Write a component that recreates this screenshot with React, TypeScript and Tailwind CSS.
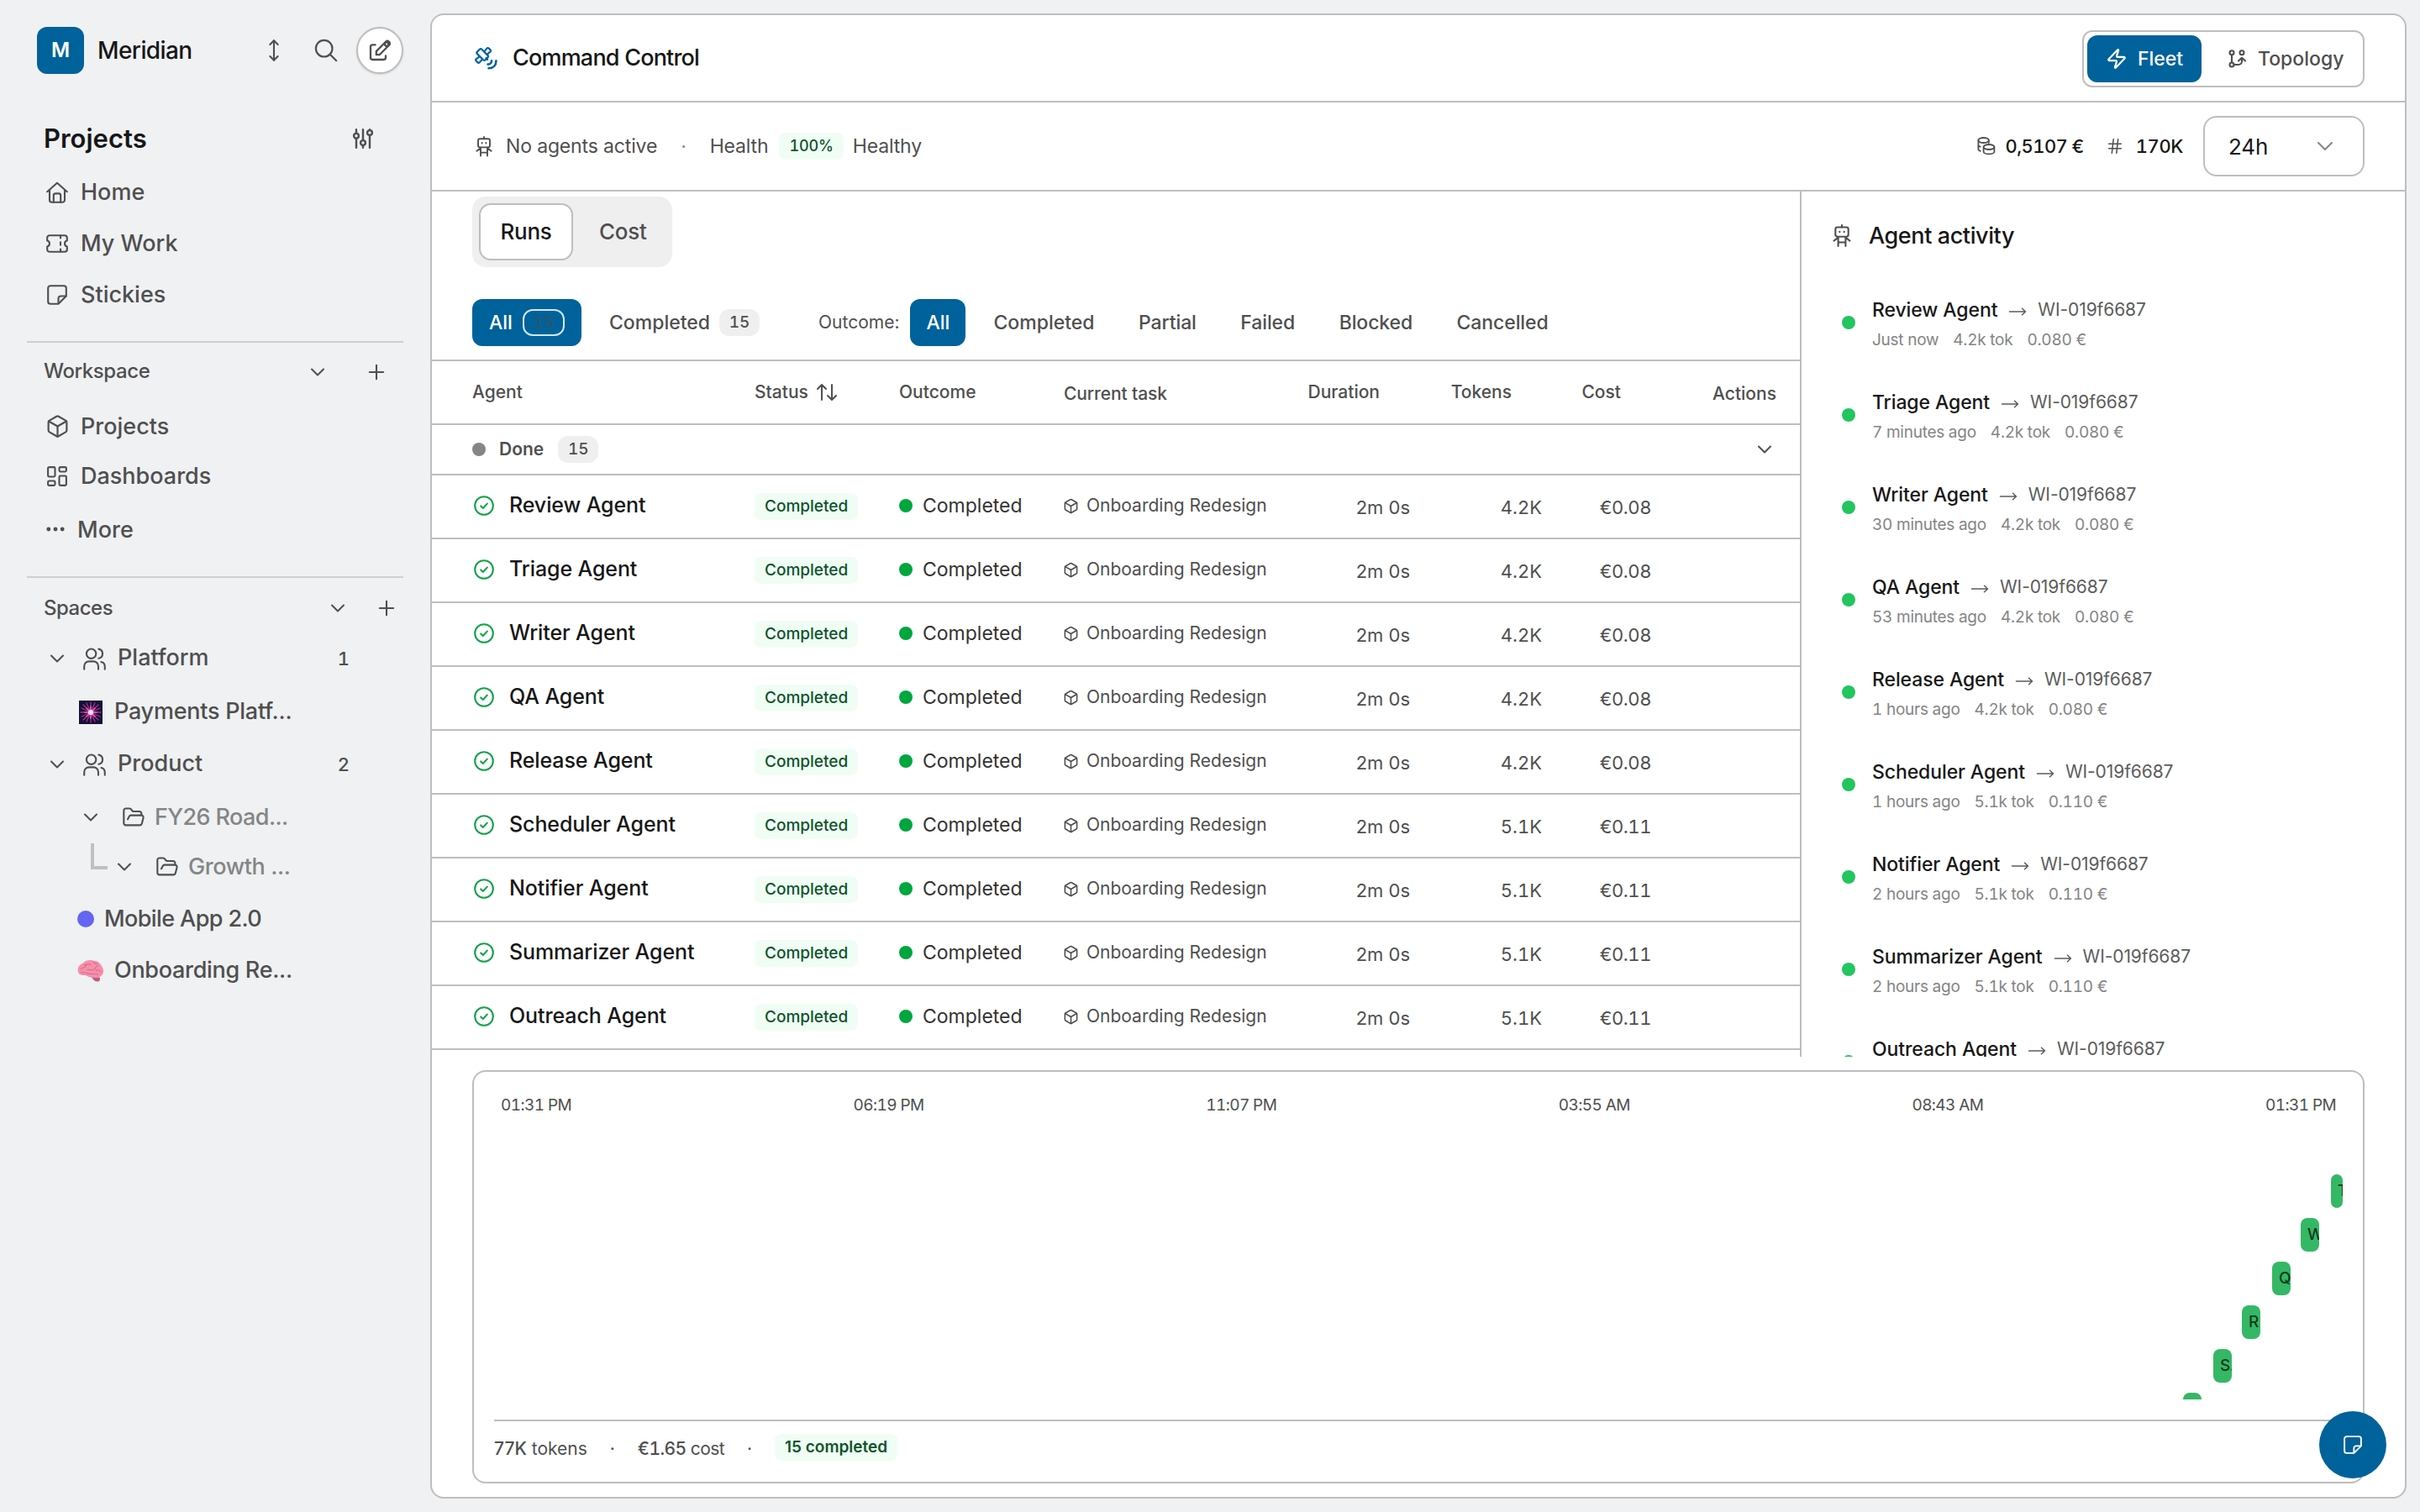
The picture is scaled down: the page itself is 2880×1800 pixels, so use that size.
import type { ReactNode } from "react";
import { Box, ChevronDown, Ellipsis, FolderOpen, Hash, MoveVertical, Plus, Zap } from "lucide-react";

type SvgProps = {
  w: number;
  h: number;
  stroke?: number;
  className?: string;
  children: ReactNode;
};

const Svg = ({ w, h, stroke = 2.1, className, children }: SvgProps) => (
  <svg
    width={w}
    height={h}
    viewBox={`0 0 ${w} ${h}`}
    fill="none"
    stroke="currentColor"
    strokeWidth={stroke}
    strokeLinecap="round"
    strokeLinejoin="round"
    className={className ?? "shrink-0"}
  >
    {children}
  </svg>
);

const HomeIcon = () => (
  <Svg w={26} h={26}>
    <path d="M1.2 12.2 13 1.8l11.8 10.4" />
    <path d="M4 10v12a2.8 2.8 0 0 0 2.8 2.8h12.4A2.8 2.8 0 0 0 22 22V10" />
    <path d="M8.8 24.8v-8a2.4 2.4 0 0 1 2.4-2.4h3.6a2.4 2.4 0 0 1 2.4 2.4v8" />
  </Svg>
);

const TicketIcon = () => (
  <Svg w={26} h={22}>
    <path d="M1.2 7.5a3.6 3.6 0 0 1 0 7V18a2.8 2.8 0 0 0 2.8 2.8h18a2.8 2.8 0 0 0 2.8-2.8v-3.5a3.6 3.6 0 0 1 0-7V4A2.8 2.8 0 0 0 22 1.2H4A2.8 2.8 0 0 0 1.2 4z" />
    <path d="M17 1.5v3M17 9.3v3.4M17 17.5v3" />
  </Svg>
);

const StickyIcon = ({ size = 24 }: { size?: number }) => (
  <svg
    width={size}
    height={size}
    viewBox="0 0 24 24"
    fill="none"
    stroke="currentColor"
    strokeWidth={2.1}
    strokeLinejoin="round"
    className="shrink-0"
  >
    <path d="M13.5 22.8H4a2.8 2.8 0 0 1-2.8-2.8V4A2.8 2.8 0 0 1 4 1.2h16A2.8 2.8 0 0 1 22.8 4v9.5z" />
    <path d="M13.5 22.8v-6.5a2.8 2.8 0 0 1 2.8-2.8h6.5" />
  </svg>
);

const DashboardIcon = () => (
  <Svg w={24} h={24}>
    <rect x="1.1" y="1.1" width="8.4" height="11.4" rx="1.4" />
    <rect x="14.5" y="1.1" width="8.4" height="5.4" rx="1.4" />
    <rect x="1.1" y="17.5" width="8.4" height="5.4" rx="1.4" />
    <rect x="14.5" y="11.5" width="8.4" height="11.4" rx="1.4" />
  </Svg>
);

const SlidersIcon = () => (
  <Svg w={26} h={24} stroke={2.4}>
    <path d="M5 1.2v4.6M5 12v10.8M13 1.2v12.6M13 20v2.8M21 1.2v.8M21 8v14.8" />
    <circle cx="5" cy="8.8" r="2.9" />
    <circle cx="13" cy="17" r="2.9" />
    <circle cx="21" cy="5" r="2.9" />
  </Svg>
);

const SearchIcon = () => (
  <Svg w={28} h={28} stroke={2.2}>
    <circle cx="11.7" cy="11.7" r="9.8" />
    <path d="m18.8 18.8 7.4 7.4" />
  </Svg>
);

const EditIcon = () => (
  <Svg w={26} h={26} stroke={2.3}>
    <path d="M7.6 6.4H4.4A2.4 2.4 0 0 0 2 8.8v12.8A2.4 2.4 0 0 0 4.4 24h13.2a2.4 2.4 0 0 0 2.4-2.4v-2.2" />
    <path d="M8.8 18.2v-4.1L20 2.8a2.8 2.8 0 0 1 4 4L12.6 18.2z" />
    <circle cx="21.2" cy="5.6" r="2.2" />
  </Svg>
);

const UsersIcon = () => (
  <Svg w={27} h={27}>
    <circle cx="9.6" cy="7.2" r="5.7" />
    <path d="M1.2 25.8v-3.6a5.8 5.8 0 0 1 5.8-5.8h5.2a5.8 5.8 0 0 1 5.8 5.8v3.6" />
    <path d="M18.4 1.6a5.7 5.7 0 0 1 0 11.2M21.4 17c2.6.6 4.4 2.8 4.4 5.6v3.2" />
  </Svg>
);

const SatelliteIcon = () => (
  <Svg w={28} h={28} stroke={2.2}>
    <rect x="3.4" y="6.2" width="13.6" height="7.6" rx="1.8" transform="rotate(45 10.2 10)" />
    <path d="m13 5.6 2.6-3.2a1.4 1.4 0 0 1 2 0l2 2a1.4 1.4 0 0 1 0 2l-3.2 2.8M6 12.8l-3.4 2.6a1.4 1.4 0 0 0 0 2l2 2a1.4 1.4 0 0 0 2 0l2.8-3.2M14.4 14.2l1.8 1.8" />
    <path d="M21 17.2c0 2.6-1.8 4.4-4.4 4.4M26.4 17.4c0 5.2-3.4 8.8-8.8 8.8" strokeWidth={2.6} />
  </Svg>
);

const RobotIcon = ({ scale = 1 }: { scale?: number }) => (
  <svg
    width={20 * scale}
    height={25 * scale}
    viewBox="0 0 20 25"
    fill="none"
    stroke="currentColor"
    strokeWidth={1.9}
    strokeLinecap="round"
    strokeLinejoin="round"
    className="shrink-0"
  >
    <path d="M10 1v2.2" />
    <rect x="3" y="3.2" width="14" height="10.2" rx="2.2" />
    <path d="M7.6 8v.4M12.4 8v.4" strokeWidth={2} />
    <path d="M6 13.6v10M14 13.6v10M6.2 19.6h7.6M5.6 14.6l-4.2 3.2M14.4 14.6l4.2 3.2" />
  </svg>
);

const CoinsIcon = () => (
  <Svg w={22} h={22} stroke={1.8}>
    <ellipse cx="7.6" cy="4" rx="6.2" ry="3" />
    <path d="M1.4 4v10.6c0 1 .9 1.8 2.4 2.2M1.4 9.4c0 1 .9 1.8 2.4 2.2M13.8 4v3" />
    <ellipse cx="14" cy="12" rx="6.4" ry="3" />
    <path d="M7.6 12v5.4c0 1.7 2.9 3 6.4 3s6.4-1.3 6.4-3V12" />
  </Svg>
);

const TopologyIcon = () => (
  <Svg w={22} h={22}>
    <circle cx="4" cy="3.8" r="2.5" />
    <circle cx="16" cy="3.8" r="2.5" />
    <circle cx="4" cy="18" r="2.5" />
    <path d="M4 6.4v9M6.6 18H12a4 4 0 0 0 4-4v-4M12 13.6l4-3.8 4 3.8" />
  </Svg>
);

const SortIcon = () => (
  <Svg w={26} h={22} stroke={2} className="ml-[9px] shrink-0">
    <path d="M7 20V2M2 7l5-5 5 5M19 2v18M14 15l5 5 5-5" />
  </Svg>
);

const ArrowIcon = () => (
  <Svg w={22} h={12} stroke={1.5} className="mx-[13px] mt-1 shrink-0 text-[#5c5c5c]">
    <path d="M1.500 6h19M16.500 2.200 20.500 6l-4 3.800" />
  </Svg>
);

const CheckIcon = () => (
  <Svg w={24} h={24}>
    <circle cx="12" cy="12" r="10.8" />
    <path d="m8.2 12.4 2.6 2.6 5-5.4" />
  </Svg>
);

const FireworkIcon = () => (
  <Svg w={28} h={28} stroke={1}>
    <rect width="28" height="28" fill="#160f38" stroke="none" />
    <path
      d="M14 2v24M2 14h24M5 5l18 18M23 5 5 23M9 3l10 22M19 3 9 25M3 9l22 10M3 19 25 9"
      stroke="#a8328c"
      strokeWidth={1.3}
    />
    <path d="M14 7v14M7 14h14M9 9l10 10M19 9 9 19" stroke="#ee5cb4" strokeWidth={1.6} />
    <circle cx="14" cy="14" r="3" fill="#ffe3f4" stroke="none" />
  </Svg>
);

const BrainIcon = () => (
  <Svg w={32} h={28} stroke={1.1}>
    <path d="M17 21c2 4 5 6 8 5.500c2-.5 2.500-3 1.500-5z" fill="#c75b78" stroke="none" />
    <path
      d="M1 15C-.5 10 3 6 7 4.500C10 1 15 .5 18.500 1.500C24 1.500 28 5 29.500 9c2.500 4 2 9-1.500 11c-3 2.500-7 2-10 1.500c-4 .5-6-1.500-8.500-2.500C5 19.500 1.500 18 1 15z"
      fill="#f490ac"
      stroke="none"
    />
    <path
      d="M4 12c2-3 5-1 6-4s4-3 6-1M12 13c3-2 5 1 8-1s2-5 5-4M4 16c4-1 6 0 9 1s8 0 12 1M22 14c2-2 5-1 6 1M19 3c1 2 3 3 5 2M8 6c1 1 2 1 3 0"
      stroke="#dc6d8a"
    />
  </Svg>
);

const Chevron = ({ className = "" }: { className?: string }) => (
  <ChevronDown size={28} strokeWidth={1.8} className={`shrink-0 ${className}`} />
);

const NavItem = ({ icon, label, height }: { icon: ReactNode; label: string; height: string }) => (
  <div className={`flex items-center pl-[55px] ${height}`}>
    <span className="flex w-[26px] justify-center">{icon}</span>
    <span className="ml-[15px]">{label}</span>
  </div>
);

const Sidebar = () => (
  <aside className="flex w-[512px] shrink-0 flex-col pt-8 text-[27px] leading-8 font-medium text-[#4f4f4f]">
    <div className="flex h-14 items-center pr-8 pl-11">
      <div className="flex size-14 items-center justify-center rounded-xl bg-[#00629b] text-2xl font-semibold text-white">
        M
      </div>
      <span className="ml-4 text-[28px] tracking-[-0.6px] text-[#171717]">Meridian</span>
      <div className="ml-auto flex items-center">
        <MoveVertical size={28} strokeWidth={1.8} />
        <span className="mr-[22px] ml-[34px]">
          <SearchIcon />
        </span>
        <div className="flex size-14 items-center justify-center rounded-full border-2 border-[#bebebe] bg-white shadow-sm">
          <EditIcon />
        </div>
      </div>
    </div>

    <div className="mt-12 flex h-[58px] items-center justify-between pr-[67px] pl-[52px]">
      <h2 className="text-[31px] font-semibold text-[#171717]">Projects</h2>
      <SlidersIcon />
    </div>
    <nav className="mt-[5px] flex flex-col gap-px">
      <NavItem icon={<HomeIcon />} label="Home" height="h-15" />
      <NavItem icon={<TicketIcon />} label="My Work" height="h-15" />
      <NavItem icon={<StickyIcon />} label="Stickies" height="h-15" />
    </nav>

    <div className="mt-[25px] mr-8 ml-8 h-0.5 bg-[#cdcfd1]" />
    <div className="flex h-[70px] items-center pr-[50px] pl-[52px]">
      <span className="pb-0.5 text-2xl tracking-[-0.4px]">Workspace</span>
      <Chevron className="ml-auto" />
      <Plus size={28} strokeWidth={1.8} className="ml-[42px]" />
    </div>
    <nav>
      <NavItem icon={<Box size={29} strokeWidth={1.8} className="shrink-0" />} label="Projects" height="h-[59px]" />
      <NavItem icon={<DashboardIcon />} label="Dashboards" height="h-[59px]" />
      <div className="flex h-[67px] items-center pl-[52px]">
        <Ellipsis size={28} strokeWidth={2.2} />
        <span className="ml-3 pt-0.5">More</span>
      </div>
    </nav>

    <div className="mt-[23px] mr-8 ml-8 h-0.5 bg-[#cdcfd1]" />
    <div className="flex h-[72px] items-center pr-[38px] pl-[52px]">
      <span className="text-2xl tracking-[-0.5px]">Spaces</span>
      <Chevron className="ml-auto" />
      <Plus size={28} strokeWidth={1.8} className="ml-[30px]" />
    </div>
    <div className="flex h-12 items-center pr-[96px] pl-[54px]">
      <Chevron />
      <span className="mr-[14px] ml-[17px]">
        <UsersIcon />
      </span>
      <span className="pb-0.5">Platform</span>
      <span className="ml-auto text-[22px] tabular-nums">1</span>
    </div>
    <div className="flex h-20 items-center gap-[14px] pl-[94px]">
      <FireworkIcon />
      <span className="pb-0.5 tracking-[-0.25px]">Payments Platf...</span>
    </div>
    <div className="flex h-11 items-center pr-[96px] pl-[54px]">
      <Chevron />
      <span className="mr-[14px] ml-[17px]">
        <UsersIcon />
      </span>
      <span className="pb-0.5">Product</span>
      <span className="ml-auto text-[22px] tabular-nums">2</span>
    </div>
    <div className="flex h-[82px] items-center pl-[94px]">
      <Chevron />
      <FolderOpen size={28} strokeWidth={1.8} className="mr-[11px] ml-[23px]" />
      <span className="tracking-[-0.6px] text-[#858585]">FY26 Road...</span>
    </div>
    <div className="flex h-9 items-center pl-[108px]">
      <div className="mr-1.5 h-[31px] w-5 self-start border-b-4 border-l-4 border-[#bfc0c1] -mt-2.5" />
      <Chevron />
      <FolderOpen size={28} strokeWidth={1.8} className="mr-[11px] ml-[23px]" />
      <span className="tracking-[-0.4px] text-[#858585]">Growth ...</span>
    </div>
    <div className="flex h-[88px] items-center gap-3 pl-[92px]">
      <span className="size-5 rounded-full bg-[#6466f1]" />
      <span className="tracking-[-0.6px]">Mobile App 2.0</span>
    </div>
    <div className="flex h-9 items-center gap-3 pl-[92px]">
      <BrainIcon />
      <span className="pb-0.5 tracking-[-0.3px]">Onboarding Re...</span>
    </div>
  </aside>
);

const Header = () => (
  <>
    <div className="flex h-[104px] items-center justify-between border-b-2 border-[#bebebe] px-12 pt-0.5">
      <div className="flex items-center pb-0.5">
        <span className="ml-0.5 text-[#00629b]">
          <SatelliteIcon />
        </span>
        <h1 className="ml-[18px] text-[27px] font-medium tracking-[-0.8px] text-[#171717]">Command Control</h1>
      </div>
      <div className="flex h-[68px] w-[336px] items-center rounded-xl border-2 border-[#bebebe] px-1 text-[23px] font-medium">
        <button className="flex h-14 w-[136px] items-center justify-center gap-3 rounded-xl bg-[#00629b] text-white">
          <Zap size={26} strokeWidth={2} />
          Fleet
        </button>
        <button className="ml-8 flex items-center gap-[13px] text-[#4f4f4f]">
          <TopologyIcon />
          Topology
        </button>
      </div>
    </div>
    <div className="flex h-[106px] items-center border-b-2 border-[#bebebe] px-12 text-[23px] tracking-[-0.15px] text-[#4f4f4f]">
      <span className="ml-1">
        <RobotIcon />
      </span>
      <span className="ml-4">No agents active</span>
      <span className="mx-[28px] text-[#8a8a8a]">·</span>
      <span>Health</span>
      <span className="mr-[11px] ml-[13px] flex h-8 items-center rounded-lg bg-[#f0fdf4] px-3 text-lg font-medium text-[#0d542b] tabular-nums">
        100%
      </span>
      <span>Healthy</span>
      <div className="ml-auto flex items-center text-[22px] font-medium text-[#171717]">
        <span className="text-[#4f4f4f]">
          <CoinsIcon />
        </span>
        <span className="ml-3 tracking-[-0.6px] tabular-nums">0,5107 €</span>
        <Hash size={22} strokeWidth={1.7} className="mr-3.5 ml-[26px] text-[#4f4f4f]" />
        <span className="tracking-[-0.4px] tabular-nums">170K</span>
        <div className="ml-6 flex h-18 w-48 items-center justify-between rounded-2xl border-2 border-[#bebebe] pr-[29px] pl-7 text-[26px] font-normal">
          24h
          <ChevronDown size={32} strokeWidth={1.5} className="text-[#858585]" />
        </div>
      </div>
    </div>
  </>
);

const outcomes = ["Completed", "Partial", "Failed", "Blocked", "Cancelled"];

const Filters = () => (
  <div className="flex h-[202px] flex-col border-b-2 border-[#bebebe] pt-1.5 pl-12 font-medium text-[#4f4f4f]">
    <div className="flex h-[84px] w-[238px] items-center rounded-2xl bg-[#efefef] pl-2 text-[26px] tracking-[-0.3px]">
      <div className="flex h-[68px] w-28 items-center justify-center rounded-[14px] border-2 border-[#bebebe] bg-white pb-0.5 text-[#171717]">
        Runs
      </div>
      <span className="ml-[31px] pb-0.5">Cost</span>
    </div>
    <div className="mt-[38px] flex h-14 items-center text-[23px]">
      <button className="flex h-14 w-[130px] items-center rounded-xl bg-[#00629b] pl-5 text-white">
        All
        <span className="ml-3 flex h-8 w-[50px] items-center justify-center rounded-[12px] border-2 border-[#d3e6f1] text-[19px] text-[#2e5468] tabular-nums">
          15
        </span>
      </button>
      <span className="ml-[33px]">Completed</span>
      <span className="ml-[11px] flex h-8 w-12 items-center justify-center rounded-[12px] bg-[#efefef] text-[19px] tabular-nums">
        15
      </span>
      <span className="ml-[70px] text-[21px] font-normal">Outcome:</span>
      <button className="ml-[13px] h-14 w-[66px] rounded-xl bg-[#00629b] text-white">All</button>
      {outcomes.map((o, i) => (
        <span key={o} className={i === 0 ? "ml-[33px]" : "ml-[52.5px] tracking-[-0.1px]"}>
          {o}
        </span>
      ))}
    </div>
  </div>
);

type Run = { name: string; tokens: string; cost: string };

const runs: Run[] = [
  { name: "Review Agent", tokens: "4.2K", cost: "€0.08" },
  { name: "Triage Agent", tokens: "4.2K", cost: "€0.08" },
  { name: "Writer Agent", tokens: "4.2K", cost: "€0.08" },
  { name: "QA Agent", tokens: "4.2K", cost: "€0.08" },
  { name: "Release Agent", tokens: "4.2K", cost: "€0.08" },
  { name: "Scheduler Agent", tokens: "5.1K", cost: "€0.11" },
  { name: "Notifier Agent", tokens: "5.1K", cost: "€0.11" },
  { name: "Summarizer Agent", tokens: "5.1K", cost: "€0.11" },
  { name: "Outreach Agent", tokens: "5.1K", cost: "€0.11" },
];

const RunsTable = () => (
  <div>
    <div className="grid h-[76px] grid-cols-[336px_172px_196px_283px_129px_157px_130px_149px] items-center border-b-2 border-[#bebebe] pl-12 text-[21px] font-medium text-[#4f4f4f]">
      <span>Agent</span>
      <span className="flex items-center">
        Status
        <SortIcon />
      </span>
      <span>Outcome</span>
      <span className="pt-1 tracking-[-0.1px]">Current task</span>
      <span className="pr-9 text-right">Duration</span>
      <span className="pr-9 text-right">Tokens</span>
      <span className="pr-9 text-right">Cost</span>
      <span className="pt-1 text-right">Actions</span>
    </div>
    <div className="flex h-15 items-center border-b-2 border-[#bebebe] pr-[28px] pl-12 text-[#4f4f4f]">
      <span className="size-4 rounded-full bg-[#858585]" />
      <span className="ml-4 text-[21px] font-semibold">Done</span>
      <span className="ml-[17px] flex h-8 w-12 items-center justify-center rounded-[12px] bg-[#efefef] text-[19px] font-medium tabular-nums">
        15
      </span>
      <Chevron className="ml-auto" />
    </div>
    {runs.map((run) => (
      <div
        key={run.name}
        className="grid h-[76px] grid-cols-[336px_172px_196px_283px_129px_157px_130px_149px] items-center border-b-2 border-[#bebebe] pl-12 text-[23px] text-[#4f4f4f]"
      >
        <span className="flex items-center gap-[18px] pb-0.5 pl-0.5 text-[25px] font-medium tracking-[-0.1px] text-[#171717]">
          <span className="text-[#16a34a]">
            <CheckIcon />
          </span>
          {run.name}
        </span>
        <span className="flex">
          <span className="flex h-8 items-center rounded-lg bg-[#f0fdf4] px-3 text-[19px] font-medium text-[#0d542b]">
            Completed
          </span>
        </span>
        <span className="flex items-center gap-3 pb-0.5 text-[#333]">
          <span className="size-4 rounded-full bg-[#00a63e]" />
          Completed
        </span>
        <span className="flex items-center gap-[9px] pb-0.5 text-[21px]">
          <Box size={19} strokeWidth={2} className="-ml-px" />
          Onboarding Redesign
        </span>
        <span className="pt-0.5 text-right text-[22px]">2m 0s</span>
        <span className="pt-0.5 text-right text-[22px] tabular-nums">{run.tokens}</span>
        <span className="pt-0.5 text-right text-[22px] tracking-[-0.4px] tabular-nums">{run.cost}</span>
      </div>
    ))}
  </div>
);

type Activity = { name: string; when: string; tok: string; cost: string };

const activity: Activity[] = [
  { name: "Review Agent", when: "Just now", tok: "4.2k tok", cost: "0.080 €" },
  { name: "Triage Agent", when: "7 minutes ago", tok: "4.2k tok", cost: "0.080 €" },
  { name: "Writer Agent", when: "30 minutes ago", tok: "4.2k tok", cost: "0.080 €" },
  { name: "QA Agent", when: "53 minutes ago", tok: "4.2k tok", cost: "0.080 €" },
  { name: "Release Agent", when: "1 hours ago", tok: "4.2k tok", cost: "0.080 €" },
  { name: "Scheduler Agent", when: "1 hours ago", tok: "5.1k tok", cost: "0.110 €" },
  { name: "Notifier Agent", when: "2 hours ago", tok: "5.1k tok", cost: "0.110 €" },
  { name: "Summarizer Agent", when: "2 hours ago", tok: "5.1k tok", cost: "0.110 €" },
  { name: "Outreach Agent", when: "2 hours ago", tok: "5.1k tok", cost: "0.110 €" },
];

const ActivityPanel = () => (
  <section className="flex-1 border-l-2 border-[#bebebe] pl-[37px]">
    <div className="mt-[25px] flex h-14 items-center text-[#4f4f4f]">
      <RobotIcon scale={1.1} />
      <h2 className="ml-[21px] text-[27px] font-medium tracking-[-0.4px] text-[#171717]">Agent activity</h2>
    </div>
    <div className="mt-5">
      {activity.map((a) => (
        <div key={a.name} className="flex h-[110px] items-center pl-[11px]">
          <span className="size-4 rounded-full bg-[#22c55e]" />
          <div className="ml-5 pt-[7px]">
            <div className="flex h-9 items-center text-[23px] font-medium tracking-[-0.1px] text-[#171717]">
              {a.name}
              <ArrowIcon />
              <span className="text-[21px] font-normal text-[#5c5c5c]">WI-019f6687</span>
            </div>
            <div className="flex h-[37px] items-center gap-[17px] text-[19px] tracking-[-0.25px] text-[#858585] tabular-nums">
              <span>{a.when}</span>
              <span>{a.tok}</span>
              <span>{a.cost}</span>
            </div>
          </div>
        </div>
      ))}
    </div>
  </section>
);

const ticks = ["01:31 PM", "06:19 PM", "11:07 PM", "03:55 AM", "08:43 AM", "01:31 PM"];

// left / top are offsets inside the 2200px wide lane area
const bars = [
  { label: "T", left: 2186, top: 52, width: 14 },
  { label: "W", left: 2150, top: 104, width: 22 },
  { label: "Q", left: 2116, top: 156, width: 22 },
  { label: "R", left: 2080, top: 208, width: 22 },
  { label: "S.", left: 2046, top: 260, width: 22 },
  { label: "N", left: 2010, top: 312, width: 22 },
];

const Timeline = () => (
  <section className="mx-12 mt-4 flex h-[492px] flex-col rounded-2xl border-2 border-[#bebebe] px-6">
    <div className="mt-6 flex h-8 items-center justify-between px-2 text-[19px] tracking-[-0.6px] text-[#4f4f4f] tabular-nums">
      {ticks.map((t, i) => (
        <span key={i}>{t}</span>
      ))}
    </div>
    <div className="relative mt-[14px] h-[320px] overflow-hidden">
      {bars.map((b) => (
        <div
          key={b.label}
          className="absolute h-10 overflow-hidden rounded-lg bg-[#34b865] pl-2 text-[19px] leading-10 font-medium tracking-[-0.5px] whitespace-nowrap text-[#0c3a1d]"
          style={{ left: b.left, top: b.top, width: b.width }}
        >
          {b.label}
        </div>
      ))}
    </div>
    <div className="mt-6 flex h-[70px] items-center border-t-2 border-[#bebebe] pb-0.5 text-[21px] text-[#4f4f4f]">
      <span>
        <span className="font-medium">77K</span> tokens
      </span>
      <span className="mx-[27px]">·</span>
      <span className="tracking-[-0.6px]">
        <span className="font-medium tabular-nums">€1.65</span> cost
      </span>
      <span className="mx-[27px]">·</span>
      <span className="mb-1 flex h-8 items-center rounded-lg bg-[#f0fdf4] px-3 text-[19px] font-semibold text-[#0d542b]">
        15 completed
      </span>
    </div>
  </section>
);

const App = () => (
  <div className="relative flex h-[1800px] w-[2880px] overflow-hidden bg-[#eff1f3] font-['Inter',sans-serif]">
    <Sidebar />
    <main className="mt-4 h-[1768px] w-[2352px] overflow-hidden rounded-2xl border-2 border-[#bebebe] bg-white">
      <Header />
      <div className="flex h-[1030px] overflow-hidden">
        <div className="w-[1628px]">
          <Filters />
          <RunsTable />
        </div>
        <ActivityPanel />
      </div>
      <Timeline />
    </main>
    <button className="absolute right-10 bottom-10 flex size-20 items-center justify-center rounded-full bg-[#00629b] text-white">
      <StickyIcon size={22} />
    </button>
  </div>
);

export default App;
